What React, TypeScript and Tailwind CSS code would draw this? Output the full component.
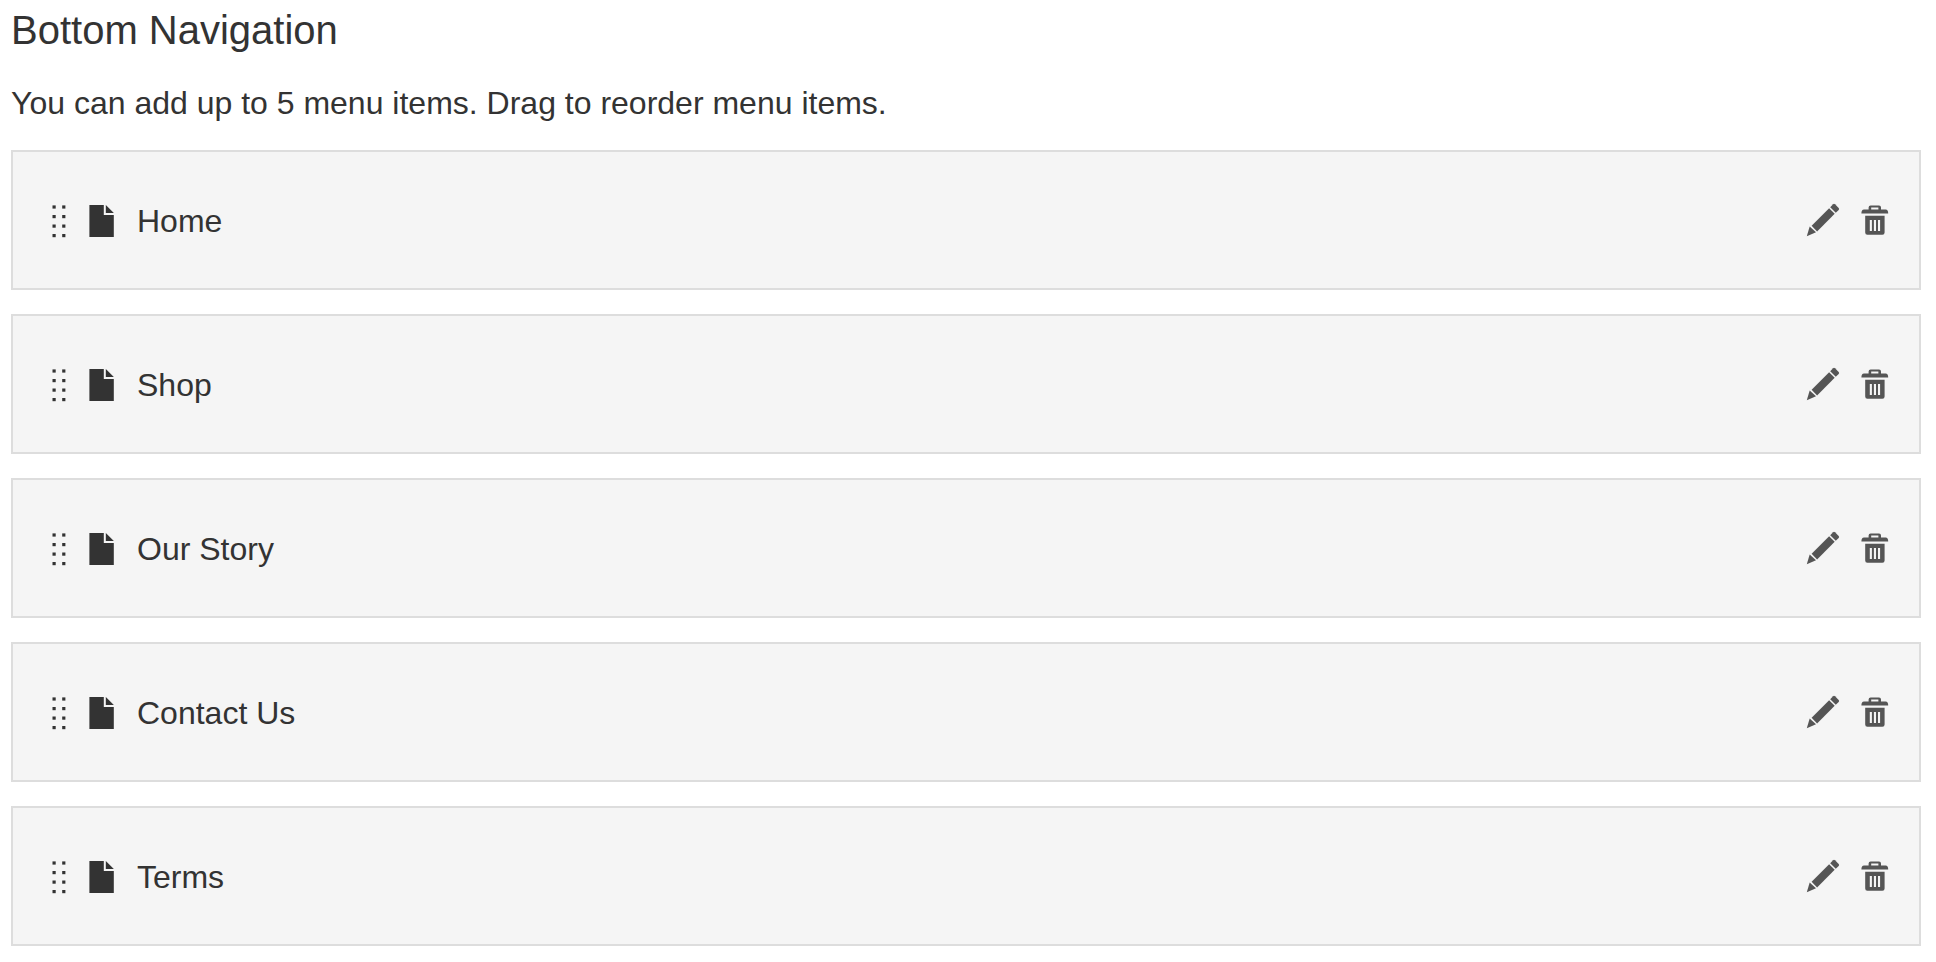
import React from "react";

const items = ["Home", "Shop", "Our Story", "Contact Us", "Terms"];

function GripIcon() {
  return (
    <svg aria-hidden="true" viewBox="0 0 14 34" className="h-[34px] w-[14px]" fill="#333333">
      {[1.4, 11, 20.5, 30].map((y) => (
        <React.Fragment key={y}>
          <rect x="0.5" y={y} width="3.2" height="3.2" />
          <rect x="10.2" y={y} width="3.2" height="3.2" />
        </React.Fragment>
      ))}
    </svg>
  );
}

function PageIcon() {
  return (
    <svg aria-hidden="true" viewBox="0 0 25 34" className="h-[34px] w-[25px]" fill="#333333">
      <path d="M0.4 1H14.8V11H24.8V33H0.4Z" />
      <path d="M16.8 1L24.8 9H16.8Z" />
    </svg>
  );
}

function PencilIcon() {
  return (
    <svg aria-hidden="true" viewBox="0 0 34 34" className="size-[34px]" fill="#555555">
      <path d="M0.8 33.2L3.7 23.6L10 29.2Z" />
      <path d="M5.6 22.8L23.1 5.3L28.7 10.7L11.1 28.4Z" />
      <path d="M24.2 4.3L27.1 1.3Q28 0.4 29 1.3L32.7 5Q33.6 6 32.7 7L29.8 9.8Z" />
    </svg>
  );
}

function TrashIcon() {
  return (
    <svg aria-hidden="true" viewBox="0 0 28 34" className="h-[34px] w-[28px]" fill="#555555">
      <path
        fillRule="evenodd"
        d="M7.6 6.6V4.4Q7.6 2.4 9.6 2.4H18Q20 2.4 20 4.4V6.6H24.6Q27.2 6.6 27.2 10.6H0.4Q0.4 6.6 3 6.6ZM10.2 4.6V6.6H17.4V4.6Z"
      />
      <path
        fillRule="evenodd"
        d="M4.2 12.8H23.6V29.6Q23.6 31.8 21.4 31.8H6.4Q4.2 31.8 4.2 29.6ZM8.8 17V28H10.9V17ZM12.9 17V28H15V17ZM17 17V28H19.1V17Z"
      />
    </svg>
  );
}

export default function App() {
  return (
    <main className="pt-2 pr-[15px] pb-4 pl-[11px] font-['Liberation_Sans',Arial,sans-serif] text-[32px] leading-[40px] text-[#333333]">
      <h1 className="text-[40px] leading-[45px]">Bottom Navigation</h1>
      <p className="mt-[30px]">You can add up to 5 menu items. Drag to reorder menu items.</p>
      <ul className="mt-[27px] flex flex-col gap-6">
        {items.map((item) => (
          <li
            key={item}
            className="flex items-center border-2 border-[#dddddd] bg-[#f5f5f5] py-[47px] pr-[30px] pl-[39px]"
          >
            <div className="flex flex-1 items-center pt-[2px]">
              <button type="button" aria-label={`Reorder ${item}`} className="cursor-grab">
                <GripIcon />
              </button>
              <span className="ml-[23px]">
                <PageIcon />
              </span>
              <span className="ml-[23px]">{item}</span>
            </div>
            <button type="button" aria-label={`Edit ${item}`} className="cursor-pointer">
              <PencilIcon />
            </button>
            <button type="button" aria-label={`Delete ${item}`} className="ml-[21px] cursor-pointer">
              <TrashIcon />
            </button>
          </li>
        ))}
      </ul>
    </main>
  );
}
